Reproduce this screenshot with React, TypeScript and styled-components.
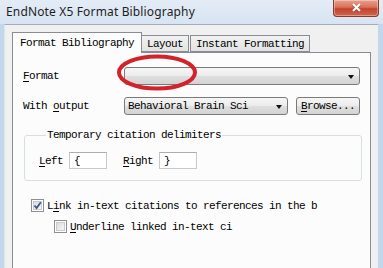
import styled, { createGlobalStyle } from 'styled-components';

const GlobalStyle = createGlobalStyle`
  html, body {
    margin: 0;
    padding: 0;
  }
  body {
    width: 383px;
    height: 268px;
    overflow: hidden;
    background: #c2d6ec;
  }
`;

const Window = styled.div`
  position: relative;
  width: 383px;
  height: 268px;
  overflow: hidden;
  display: flex;
  flex-direction: column;
  background: #c2d6ec;
  font-family: 'Liberation Mono', 'Courier New', monospace;
  font-size: 11px;
  letter-spacing: -0.6px;
  color: #000;
`;

const TitleBar = styled.div`
  height: 24px;
  flex: 0 0 24px;
  display: flex;
  align-items: flex-start;
  justify-content: space-between;
  background: linear-gradient(#e4ecf6, #d8e4f2);
`;

const Title = styled.div`
  padding: 3px 0 0 6px;
  font-family: 'Noto Sans', 'Open Sans', sans-serif;
  font-size: 12px;
  letter-spacing: 0.15px;
  color: #1e1e1e;
`;

const CloseButton = styled.div`
  width: 44px;
  height: 16px;
  margin-right: 4px;
  display: flex;
  align-items: center;
  justify-content: center;
  border: 1px solid #8a3a2c;
  border-top: none;
  border-radius: 0 0 4px 4px;
  background: linear-gradient(#e9a08f 0%, #d8705a 45%, #c2432c 55%, #d0664d 100%);
  box-shadow: inset 0 0 0 1px rgba(255, 255, 255, 0.35);
`;

const Frame = styled.div`
  flex: 1;
  display: flex;
  padding: 0 5px 0 4px;
  min-height: 0;
`;

const Body = styled.div`
  flex: 1;
  display: flex;
  flex-direction: column;
  background: #f0f0f0;
  border-top: 1px solid #a3acb8;
  border-left: 1px solid #dfe4ea;
  padding: 7px 7px 0 7px;
`;

const TabStrip = styled.div`
  display: flex;
  align-items: flex-end;
  height: 20px;
  position: relative;
  z-index: 1;
`;

const Tab = styled.div<{ $active?: boolean; $first?: boolean }>`
  box-sizing: border-box;
  height: ${(p) => (p.$active ? '21px' : '17px')};
  margin-bottom: ${(p) => (p.$active ? '-1px' : '0')};
  margin-left: ${(p) => (p.$active || !p.$first ? '0' : '1px')};
  padding: ${(p) => (p.$active ? '4px 7px 0 7px' : '2px 5px 0 5px')};
  border: 1px solid #898c95;
  border-bottom: ${(p) => (p.$active ? 'none' : '1px solid #898c95')};
  border-left: ${(p) => (p.$active || p.$first ? '1px solid #898c95' : 'none')};
  background: ${(p) => (p.$active ? '#fcfcfc' : 'linear-gradient(#f2f2f2, #e3e3e3)')};
  white-space: nowrap;
  line-height: 13px;
`;

const Panel = styled.div`
  flex: 1;
  background: #fcfcfc;
  border: 1px solid #898c95;
  border-bottom: none;
  padding: 14px 10px 0 10px;
  display: flex;
  flex-direction: column;
`;

const Row = styled.div<{ $gap?: number }>`
  display: flex;
  align-items: center;
  height: 18px;
  margin-top: ${(p) => p.$gap ?? 0}px;
`;

const Label = styled.div<{ $width: number }>`
  width: ${(p) => p.$width}px;
  flex: 0 0 ${(p) => p.$width}px;
  white-space: nowrap;
`;

const Key = styled.span`
  text-decoration: underline;
  text-underline-offset: 2px;
`;

const Select = styled.div<{ $width?: number }>`
  box-sizing: border-box;
  height: 18px;
  flex: ${(p) => (p.$width ? `0 0 ${p.$width}px` : '1')};
  display: flex;
  align-items: center;
  justify-content: space-between;
  padding: 0 5px 0 3px;
  border: 1px solid #7a7a7a;
  border-radius: 3px;
  background: linear-gradient(#f6f6f6 0%, #ececec 48%, #dfdfdf 52%, #d3d3d3 100%);
  white-space: nowrap;
`;

const Arrow = styled.span`
  width: 0;
  height: 0;
  border-left: 3.5px solid transparent;
  border-right: 3.5px solid transparent;
  border-top: 4px solid #111;
  margin-top: 1px;
`;

const Button = styled.div`
  box-sizing: border-box;
  height: 18px;
  width: 64px;
  margin-left: 8px;
  display: flex;
  align-items: center;
  justify-content: center;
  border: 1px solid #7a7a7a;
  border-radius: 3px;
  background: linear-gradient(#f6f6f6 0%, #ececec 48%, #dfdfdf 52%, #d3d3d3 100%);
`;

const Group = styled.fieldset`
  margin: 14px -2px 0 1px;
  padding: 10px 0 11px 14px;
  border: 1px solid #d5dfe5;
  border-radius: 3px;
`;

const Legend = styled.legend`
  margin-left: 7px;
  padding: 0 1px;
  line-height: 13px;
`;

const FieldRow = styled.div`
  display: flex;
  align-items: center;
  height: 17px;
`;

const FieldLabel = styled.span<{ $gapBefore?: number }>`
  margin-left: ${(p) => p.$gapBefore ?? 0}px;
  margin-right: 6px;
`;

const TextBox = styled.div`
  box-sizing: border-box;
  width: 38px;
  height: 17px;
  display: flex;
  align-items: center;
  padding-left: 4px;
  background: #fff;
  border: 1px solid #c5c9d0;
  border-top-color: #abadb3;
`;

const CheckRow = styled.div<{ $indent: number; $gap: number }>`
  display: flex;
  align-items: center;
  height: 13px;
  margin-left: ${(p) => p.$indent}px;
  margin-top: ${(p) => p.$gap}px;
`;

const Box = styled.div`
  box-sizing: border-box;
  width: 13px;
  height: 13px;
  flex: 0 0 13px;
  border: 1px solid #8e8f8f;
  background: #fff;
  padding: 1px;
  display: flex;
`;

const BoxInner = styled.div`
  flex: 1;
  border: 1px solid #c8cbcf;
  background: linear-gradient(135deg, #dcdcdc, #f7f7f7);
  position: relative;
`;

const CheckText = styled.div`
  margin-left: 3px;
  white-space: nowrap;
`;

const Annotation = styled.svg`
  position: absolute;
  left: 115px;
  top: 53px;
  pointer-events: none;
`;

const Checkbox = ({ checked }: { checked?: boolean }) => (
  <Box>
    <BoxInner>
      {checked && (
        <svg width='9' height='9' viewBox='0 0 9 9' style={{ position: 'absolute', left: -1, top: -1 }}>
          <path d='M1.5 4.5 L3.6 7 L7.8 1.2' fill='none' stroke='#3d5593' strokeWidth='1.8' />
        </svg>
      )}
    </BoxInner>
  </Box>
);

export default function App() {
  return (
    <>
      <GlobalStyle />
      <Window>
        <TitleBar>
          <Title>EndNote X5 Format Bibliography</Title>
          <CloseButton>
            <svg width='11' height='10' viewBox='0 0 11 10'>
              <path d='M2 1.5 L9 8.5 M9 1.5 L2 8.5' stroke='#6b2418' strokeWidth='3' opacity='0.5' />
              <path d='M2 1 L9 8 M9 1 L2 8' stroke='#fff' strokeWidth='2.2' />
            </svg>
          </CloseButton>
        </TitleBar>
        <Frame>
          <Body>
            <TabStrip>
              <Tab $active>Format Bibliography</Tab>
              <Tab>Layout</Tab>
              <Tab $first>Instant Formatting</Tab>
            </TabStrip>
            <Panel>
              <Row>
                <Label $width={101}>
                  <Key>F</Key>ormat
                </Label>
                <Select>
                  <span />
                  <Arrow />
                </Select>
              </Row>
              <Row $gap={12}>
                <Label $width={101}>
                  With <Key>o</Key>utput
                </Label>
                <Select $width={164}>
                  <span>Behavioral Brain Sci</span>
                  <Arrow />
                </Select>
                <Button>
                  <span>
                    <Key>B</Key>rowse...
                  </span>
                </Button>
              </Row>
              <Group>
                <Legend>Temporary citation delimiters</Legend>
                <FieldRow>
                  <FieldLabel>
                    <Key>L</Key>eft
                  </FieldLabel>
                  <TextBox>{'{'}</TextBox>
                  <FieldLabel $gapBefore={16}>
                    <Key>R</Key>ight
                  </FieldLabel>
                  <TextBox>{'}'}</TextBox>
                </FieldRow>
              </Group>
              <CheckRow $indent={8} $gap={18}>
                <Checkbox checked />
                <CheckText>
                  L<Key>i</Key>nk in-text citations to references in the b
                </CheckText>
              </CheckRow>
              <CheckRow $indent={31} $gap={8}>
                <Checkbox />
                <CheckText>
                  <Key>U</Key>nderline linked in-text ci
                </CheckText>
              </CheckRow>
            </Panel>
          </Body>
        </Frame>
        <Annotation width='84' height='40' viewBox='0 0 84 40'>
          <ellipse cx='42' cy='19.5' rx='38' ry='16' fill='none' stroke='#d3232a' strokeWidth='4' />
        </Annotation>
      </Window>
    </>
  );
}
